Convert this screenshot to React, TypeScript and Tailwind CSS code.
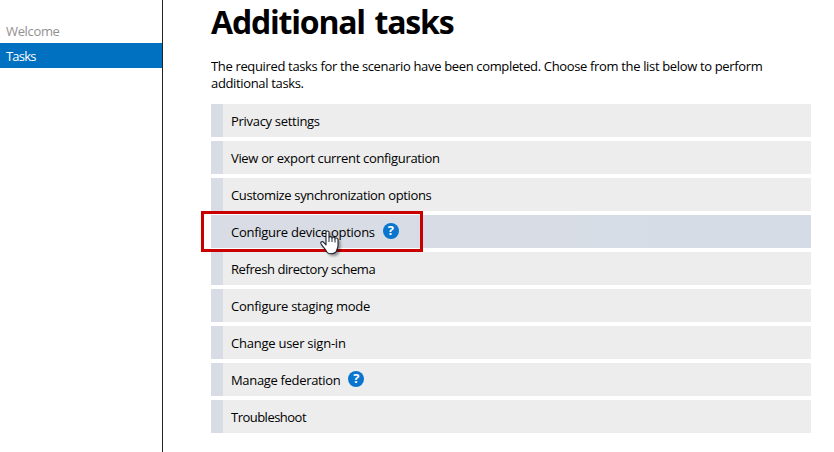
const tasks = [
  { label: 'Privacy settings', ls: 'tracking-[-0.3px]' },
  { label: 'View or export current configuration', ls: 'tracking-[-0.33px]' },
  { label: 'Customize synchronization options', ls: 'tracking-[-0.36px]' },
  { label: 'Configure device options', ls: 'tracking-[-0.27px]', help: true, active: true },
  { label: 'Refresh directory schema', ls: 'tracking-[-0.43px]' },
  { label: 'Configure staging mode', ls: 'tracking-[-0.25px]' },
  { label: 'Change user sign-in', ls: 'tracking-[-0.24px]' },
  { label: 'Manage federation', ls: 'tracking-[-0.33px]', help: true },
  { label: 'Troubleshoot', ls: 'tracking-[-0.52px]' },
];

function HandCursor() {
  return (
    <svg className="absolute top-[15px] left-[97px] z-20 overflow-visible drop-shadow-[2px_2px_1px_rgba(0,0,0,0.35)]" width="21" height="26" viewBox="0 0 21 26">
      <path
        d="M6 2.3C6 .6 9 .6 9 2.3V7.5C9 6.2 12 6.2 12 8C12 6.7 15 6.7 15 8.7C15 7.5 18 7.7 18 9.5V15.5C18 18.5 16.3 20 16 22C13.5 24.3 8.5 24.3 6.8 22C6.3 19.5 2.6 16.8 1 13.8C.2 11.8 2.4 10.9 3.9 12.6L6 14.8Z"
        fill="#fff"
        stroke="#1d2433"
        strokeWidth="1.1"
        strokeLinejoin="round"
      />
      <path d="M9 7.5V12M12 8V12M15 9V12.5" fill="none" stroke="#1d2433" strokeWidth="1" />
    </svg>
  );
}

export default function App() {
  return (
    <div className="flex h-[452px] w-[834px] overflow-hidden bg-white font-['Open_Sans','Noto_Sans',sans-serif] text-[13px] text-black">
      <nav className="w-[163px] shrink-0 border-r border-[#222] pt-[18px]">
        <div className="flex h-[25px] items-center pt-0.5 pl-1.5 tracking-[-0.35px] text-[#929292]">Welcome</div>
        <div className="flex h-[25px] items-center bg-[#0070c0] pt-0.5 pl-1.5 tracking-[-0.8px] text-white">Tasks</div>
      </nav>
      <main className="ml-12 w-[600px]">
        <h1 className="h-[58px] whitespace-nowrap text-[32px] leading-[44px] font-bold tracking-[-1.2px] [word-spacing:2.5px]">Additional tasks</h1>
        <p className="h-[46px] whitespace-nowrap leading-[17px] tracking-[-0.345px]">
          The required tasks for the scenario have been completed. Choose from the list below to perform
          <br />
          additional tasks.
        </p>
        <ul className="flex flex-col gap-1">
          {tasks.map((t) => (
            <li key={t.label} className={`relative flex h-[33px] items-center border-l-12 border-[#d8dce4] pl-2 ${t.active ? 'bg-linear-to-r from-[#d9dce4] to-[#d5dce6]' : 'bg-[#ededed]'}`}>
              <span className={`whitespace-nowrap pt-0.5 ${t.ls}`}>{t.label}</span>
              {t.help && (
                <span className="mb-px ml-2 flex size-4 items-center justify-center rounded-full bg-[#0a75ce] text-[13px] font-bold text-white">?</span>
              )}
              {t.active && (
                <>
                  <div className="absolute -top-1 -left-[22px] z-10 h-[41px] w-[222px] border-3 border-[#c80000]" />
                  <HandCursor />
                </>
              )}
            </li>
          ))}
        </ul>
      </main>
    </div>
  );
}
